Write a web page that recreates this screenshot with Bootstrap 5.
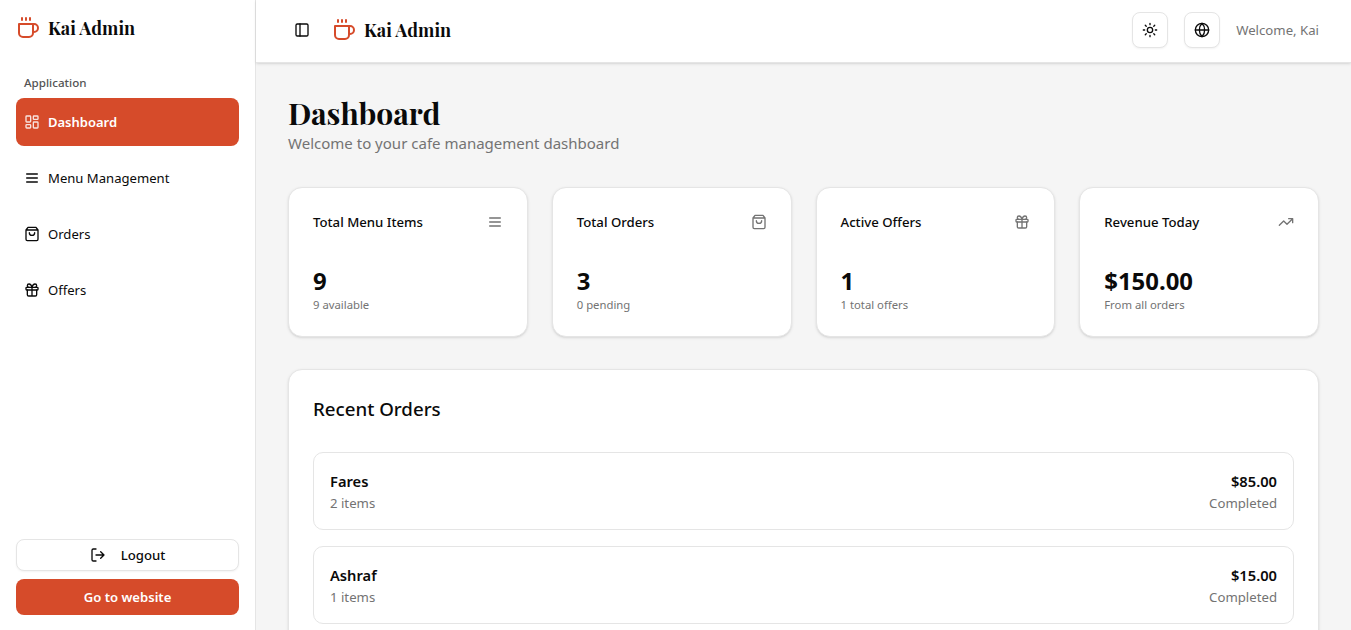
<!DOCTYPE html>
<html lang="en">
<head>
<meta charset="utf-8">
<meta name="viewport" content="width=device-width, initial-scale=1">
<title>Kai Admin</title>
<link href="https://cdn.jsdelivr.net/npm/bootstrap@5.3.0/dist/css/bootstrap.min.css" rel="stylesheet">
<style>
:root{--brand:#d64b2a;--line:#e5e5e5;--ink:#0a0a0a;--muted:#737373}
body{font-family:"Noto Sans","Open Sans",sans-serif;color:var(--ink);background:#f5f5f5;font-size:13.2px;line-height:20px}
svg{fill:none;stroke:currentColor;stroke-width:2;stroke-linecap:round;stroke-linejoin:round;flex-shrink:0;display:block}
.fw-md{font-weight:550}
.soft{color:var(--muted)}
.serif{font-family:"Playfair Display","Liberation Serif",serif;font-weight:700}
.brand-name{font-size:18px;line-height:28px}
.brand-ink{color:var(--brand)}
.sidebar{width:256px;border-right:1px solid var(--line)}
.sidebar .brand-row{padding:14px 16px 0}
.group-label{font-size:11.6px;font-weight:500;color:#545454;line-height:16px;padding:33px 8px 7px}
.side-nav{gap:8px}
.side-nav .nav-link{height:48px;padding:0 8px;gap:8px;color:var(--ink);border-radius:8px;font-size:13.1px}
.side-nav .nav-link.active{background:var(--brand);color:#fff;font-weight:600;font-size:13px}
.side-nav .nav-link.active svg{opacity:.85}
.side-foot{padding:8px 16px 15px}
.sidebar .btn{border-radius:8px;font-size:13.2px;padding:0;line-height:20px}
.btn-outline-soft{background:#fff;border:1px solid var(--line);color:var(--ink);font-weight:550;box-shadow:0 1px 2px rgba(0,0,0,.05)}
.sidebar .btn-logout{height:32px;gap:15px}
.sidebar .btn-site{height:36px;background:var(--brand);color:#fff;font-weight:600;font-size:13.1px;border:0}
.topbar{height:63px;padding:0 32px 3px 38px;border-bottom:1px solid var(--line);box-shadow:0 1px 3px rgba(0,0,0,.1),0 1px 2px -1px rgba(0,0,0,.1);z-index:1}
.topbar .brand-group{margin-left:22px}
.btn-square{width:36px;height:36px;border-radius:8px;padding:0}
.page{padding:32px}
.page h1{font-size:30px;line-height:36px}
.lead-in{font-size:15.03px;line-height:24px}
.stats{display:grid;grid-template-columns:repeat(4,1fr);gap:24px;margin-top:32px}
.panel{border:1px solid var(--line);border-radius:14px;padding:24px;box-shadow:0 1px 3px rgba(0,0,0,.1),0 1px 2px -1px rgba(0,0,0,.1)}
.stat{height:150px;padding-bottom:23px}
.stat .value{font-size:23.9px;line-height:32px;font-weight:700}
.stat .note{font-size:11.3px;line-height:16px}
.orders{margin-top:32px}
.orders h2{font-size:18.7px;line-height:28px;font-weight:550;margin:1px 0 29px}
.order{border:1px solid var(--line);border-radius:10px;padding:16px;height:78px}
.order .title{font-size:14.7px;line-height:24px;font-weight:570}
</style>
</head>
<body>
<svg width="0" height="0" class="position-absolute" aria-hidden="true">
  <symbol id="i-cup" viewBox="0 0 24 24"><path d="M6 2v2M10 2v2M14 2v2M17 8h1a4 4 0 1 1 0 8h-1M3 8h14v9a4 4 0 0 1-4 4H7a4 4 0 0 1-4-4Z"/></symbol>
  <symbol id="i-grid" viewBox="0 0 24 24"><rect width="7" height="9" x="3" y="3" rx="1"/><rect width="7" height="5" x="14" y="3" rx="1"/><rect width="7" height="9" x="14" y="12" rx="1"/><rect width="7" height="5" x="3" y="16" rx="1"/></symbol>
  <symbol id="i-menu" viewBox="0 0 24 24"><path d="M4 6h16M4 12h16M4 18h16"/></symbol>
  <symbol id="i-bag" viewBox="0 0 24 24"><path d="M6 2 3 6v14a2 2 0 0 0 2 2h14a2 2 0 0 0 2-2V6l-3-4ZM3 6h18M16 10a4 4 0 0 1-8 0"/></symbol>
  <symbol id="i-gift" viewBox="0 0 24 24"><rect x="3" y="8" width="18" height="4" rx="1"/><path d="M12 8v13M19 12v7a2 2 0 0 1-2 2H7a2 2 0 0 1-2-2v-7M7.500 8a2.500 2.500 0 0 1 0-5A4.800 8 0 0 1 12 8a4.800 8 0 0 1 4.500-5 2.500 2.500 0 0 1 0 5"/></symbol>
  <symbol id="i-exit" viewBox="0 0 24 24"><path d="M9 21H5a2 2 0 0 1-2-2V5a2 2 0 0 1 2-2h4M16 17l5-5-5-5M21 12H9"/></symbol>
  <symbol id="i-panel" viewBox="0 0 24 24"><rect x="3" y="3" width="18" height="18" rx="2"/><path d="M9 3v18"/></symbol>
  <symbol id="i-sun" viewBox="0 0 24 24"><circle cx="12" cy="12" r="4"/><path d="M12 2v2M12 20v2M4.930 4.930l1.410 1.410M17.660 17.660l1.410 1.410M2 12h2M20 12h2M6.340 17.660l-1.410 1.410M19.070 4.930l-1.410 1.410"/></symbol>
  <symbol id="i-globe" viewBox="0 0 24 24"><circle cx="12" cy="12" r="10"/><path d="M12 2a14.500 14.500 0 0 0 0 20 14.500 14.500 0 0 0 0-20M2 12h20"/></symbol>
  <symbol id="i-trend" viewBox="0 0 24 24"><path d="M16 7h6v6M22 7l-8.500 8.500-5-5L2 17"/></symbol>
</svg>

<div class="d-flex vh-100 overflow-hidden">
  <aside class="sidebar bg-white d-flex flex-column flex-shrink-0">
    <div class="brand-row d-flex align-items-center">
      <svg class="brand-ink me-2" width="24" height="24"><use href="#i-cup"/></svg>
      <span class="serif brand-name">Kai Admin</span>
    </div>
    <div class="px-3 flex-grow-1">
      <div class="group-label">Application</div>
      <nav class="side-nav nav flex-column">
        <a class="nav-link active d-flex align-items-center" href="#"><svg width="16" height="16"><use href="#i-grid"/></svg>Dashboard</a>
        <a class="nav-link d-flex align-items-center" href="#"><svg width="16" height="16"><use href="#i-menu"/></svg>Menu Management</a>
        <a class="nav-link d-flex align-items-center" href="#"><svg width="16" height="16"><use href="#i-bag"/></svg>Orders</a>
        <a class="nav-link d-flex align-items-center" href="#"><svg width="16" height="16"><use href="#i-gift"/></svg>Offers</a>
      </nav>
    </div>
    <div class="side-foot d-flex flex-column gap-2">
      <button class="btn btn-outline-soft btn-logout d-flex align-items-center justify-content-center"><svg width="16" height="16"><use href="#i-exit"/></svg>Logout</button>
      <button class="btn btn-site">Go to website</button>
    </div>
  </aside>

  <div class="flex-grow-1 d-flex flex-column">
    <header class="topbar bg-white d-flex align-items-center flex-shrink-0 position-relative">
      <svg width="16" height="16"><use href="#i-panel"/></svg>
      <div class="brand-group d-flex align-items-center">
        <svg class="brand-ink me-2 ms-n1" width="24" height="24"><use href="#i-cup"/></svg>
        <span class="serif brand-name">Kai Admin</span>
      </div>
      <div class="d-flex align-items-center gap-3 ms-auto">
        <button class="btn btn-outline-soft btn-square d-flex align-items-center justify-content-center" aria-label="Theme"><svg width="16" height="16"><use href="#i-sun"/></svg></button>
        <button class="btn btn-outline-soft btn-square d-flex align-items-center justify-content-center" aria-label="Language"><svg width="16" height="16"><use href="#i-globe"/></svg></button>
        <span class="soft">Welcome, Kai</span>
      </div>
    </header>

    <main class="page flex-grow-1 overflow-hidden">
      <h1 class="serif m-0">Dashboard</h1>
      <p class="lead-in soft m-0">Welcome to your cafe management dashboard</p>

      <section class="stats">
        <div class="panel stat bg-white d-flex flex-column justify-content-between">
          <div class="d-flex justify-content-between align-items-center"><span class="fw-md">Total Menu Items</span><svg class="soft" width="16" height="16"><use href="#i-menu"/></svg></div>
          <div><div class="value">9</div><div class="note soft">9 available</div></div>
        </div>
        <div class="panel stat bg-white d-flex flex-column justify-content-between">
          <div class="d-flex justify-content-between align-items-center"><span class="fw-md">Total Orders</span><svg class="soft" width="16" height="16"><use href="#i-bag"/></svg></div>
          <div><div class="value">3</div><div class="note soft">0 pending</div></div>
        </div>
        <div class="panel stat bg-white d-flex flex-column justify-content-between">
          <div class="d-flex justify-content-between align-items-center"><span class="fw-md">Active Offers</span><svg class="soft" width="16" height="16"><use href="#i-gift"/></svg></div>
          <div><div class="value">1</div><div class="note soft">1 total offers</div></div>
        </div>
        <div class="panel stat bg-white d-flex flex-column justify-content-between">
          <div class="d-flex justify-content-between align-items-center"><span class="fw-md">Revenue Today</span><svg class="soft" width="16" height="16"><use href="#i-trend"/></svg></div>
          <div><div class="value">$150.00</div><div class="note soft">From all orders</div></div>
        </div>
      </section>

      <section class="panel orders bg-white">
        <h2>Recent Orders</h2>
        <div class="d-flex flex-column gap-3">
          <div class="order d-flex justify-content-between">
            <div><div class="title">Fares</div><div class="soft">2 items</div></div>
            <div class="text-end"><div class="title">$85.00</div><div class="soft">Completed</div></div>
          </div>
          <div class="order d-flex justify-content-between">
            <div><div class="title">Ashraf</div><div class="soft">1 items</div></div>
            <div class="text-end"><div class="title">$15.00</div><div class="soft">Completed</div></div>
          </div>
        </div>
      </section>
    </main>
  </div>
</div>
<script src="https://cdn.jsdelivr.net/npm/bootstrap@5.3.0/dist/js/bootstrap.bundle.min.js"></script>
</body>
</html>
